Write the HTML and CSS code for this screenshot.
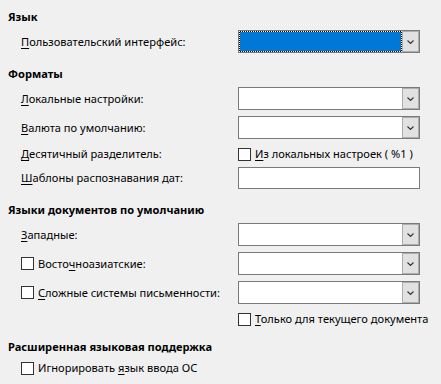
FILE: index.html
```html
<!DOCTYPE html>
<html>
<head>
    <meta charset="utf-8">
    <title>Языки и локали</title>
    <link rel="stylesheet" href="styles.css">
</head>
<body>
    <div class="page">
        <section class="group">
            <h2 class="group_title">Язык</h2>
            <div class="row row_combo row_first">
                <label class="label"><u>П</u>ользовательский интерфейс:</label>
                <div class="combo">
                    <span class="combo_value combo_focus"></span>
                    <span class="combo_btn"><svg width="7" height="4" viewBox="0 0 7 4"><polyline points="0.5,0.5 3.5,3.5 6.5,0.5" /></svg></span>
                </div>
            </div>
        </section>

        <section class="group">
            <h2 class="group_title">Форматы</h2>
            <div class="row row_combo row_first">
                <label class="label"><u>Л</u>окальные настройки:</label>
                <div class="combo">
                    <span class="combo_value"></span>
                    <span class="combo_btn"><svg width="7" height="4" viewBox="0 0 7 4"><polyline points="0.5,0.5 3.5,3.5 6.5,0.5" /></svg></span>
                </div>
            </div>
            <div class="row row_combo">
                <label class="label"><u>В</u>алюта по умолчанию:</label>
                <div class="combo">
                    <span class="combo_value"></span>
                    <span class="combo_btn"><svg width="7" height="4" viewBox="0 0 7 4"><polyline points="0.5,0.5 3.5,3.5 6.5,0.5" /></svg></span>
                </div>
            </div>
            <div class="row row_check">
                <label class="label"><u>Д</u>есятичный разделитель:</label>
                <label class="check"><span class="check_box"></span><span><u>И</u>з локальных настроек ( %1 )</span></label>
            </div>
            <div class="row row_input">
                <label class="label"><u>Ш</u>аблоны распознавания дат:</label>
                <span class="textbox"></span>
            </div>
        </section>

        <section class="group">
            <h2 class="group_title">Языки документов по умолчанию</h2>
            <div class="row row_combo row_first">
                <label class="label"><u>З</u>ападные:</label>
                <div class="combo">
                    <span class="combo_value"></span>
                    <span class="combo_btn"><svg width="7" height="4" viewBox="0 0 7 4"><polyline points="0.5,0.5 3.5,3.5 6.5,0.5" /></svg></span>
                </div>
            </div>
            <div class="row row_combo">
                <label class="check"><span class="check_box"></span><span>Восто<u>ч</u>ноазиатские:</span></label>
                <div class="combo">
                    <span class="combo_value"></span>
                    <span class="combo_btn"><svg width="7" height="4" viewBox="0 0 7 4"><polyline points="0.5,0.5 3.5,3.5 6.5,0.5" /></svg></span>
                </div>
            </div>
            <div class="row row_combo">
                <label class="check"><span class="check_box"></span><span><u>С</u>ложные системы письменности:</span></label>
                <div class="combo">
                    <span class="combo_value"></span>
                    <span class="combo_btn"><svg width="7" height="4" viewBox="0 0 7 4"><polyline points="0.5,0.5 3.5,3.5 6.5,0.5" /></svg></span>
                </div>
            </div>
            <div class="row row_check">
                <span></span>
                <label class="check"><span class="check_box"></span><span><u>Т</u>олько для текущего документа</span></label>
            </div>
        </section>

        <section class="group group_last">
            <h2 class="group_title">Расширенная языковая поддержка</h2>
            <div class="row row_check row_single">
                <label class="check"><span class="check_box"></span><span>Игнорировать <u>я</u>зык ввода ОС</span></label>
            </div>
        </section>
    </div>
</body>
</html>
```

FILE: styles.css
```css
* {
    box-sizing: border-box;
}
html, body {
    margin: 0;
    background-color: #f0f0f0;
}
body {
    font-family: "Noto Sans", "Open Sans", sans-serif;
    font-size: 11.1px;
    color: #000;
}
.page {
    padding: 8px 0 0 8px;
}
.group_title {
    margin: 0;
    height: 18px;
    line-height: 18px;
    font-size: 11.1px;
    font-weight: bold;
}
.group + .group {
    margin-top: 12px;
}
.group_last {
    margin-top: 11px !important;
}
.row {
    display: grid;
    grid-template-columns: 217px 182px;
    align-items: center;
    padding-left: 13px;
    white-space: nowrap;
}
.row_combo {
    height: 23px;
    margin-top: 6px;
}
.row_first {
    margin-top: 4px;
}
.row_check {
    height: 16px;
    margin-top: 7px;
}
.row_input {
    height: 22px;
    margin-top: 5px;
}
.row_single {
    grid-template-columns: auto;
    margin-top: 4px;
}
.label {
    line-height: 16px;
}
u {
    text-underline-offset: 2px;
}
.combo {
    display: flex;
    height: 23px;
    border: 1px solid #7a7a7a;
    background-color: #fff;
}
.combo_value {
    flex: 1;
}
.combo_focus {
    border: 1px dotted #fff;
    background: linear-gradient(#0078d7, #0078d7) padding-box, #000;
}
.combo_btn {
    width: 17px;
    display: flex;
    align-items: center;
    justify-content: center;
    background-color: #e1e1e1;
    border: 1px solid #adadad;
}
.combo_btn polyline {
    fill: none;
    stroke: #333;
    stroke-width: 1.1;
}
.textbox {
    display: block;
    height: 22px;
    border: 1px solid #7a7a7a;
    background-color: #fff;
}
.check {
    display: flex;
    align-items: center;
    gap: 4px;
    line-height: 16px;
}
.check_box {
    width: 13px;
    height: 13px;
    border: 1px solid #333;
    background-color: #fff;
    flex: none;
}
```
